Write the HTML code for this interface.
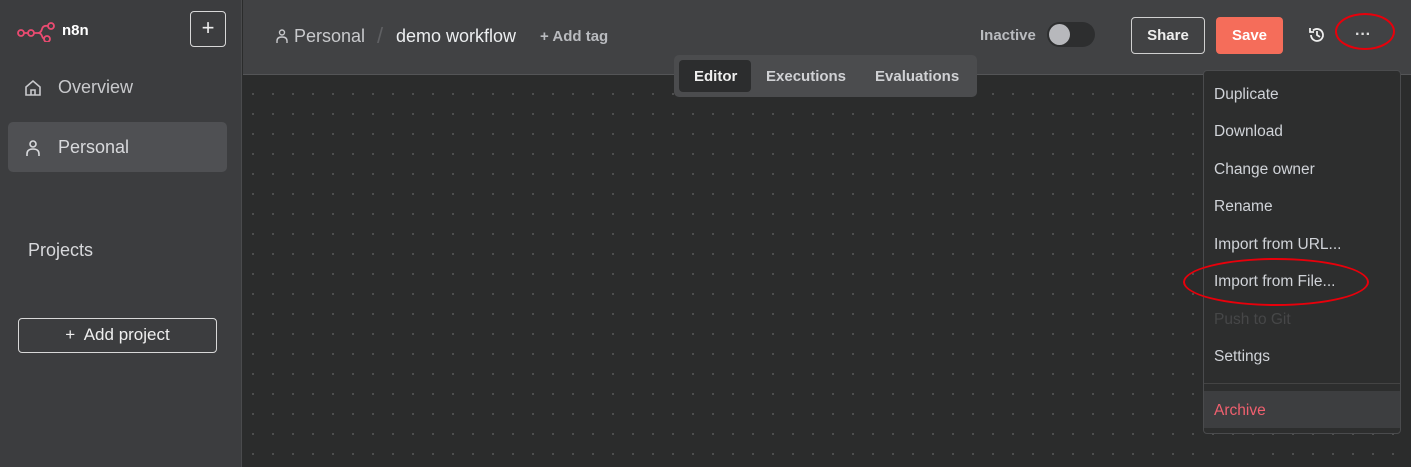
<!DOCTYPE html>
<html><head><style>
*{margin:0;padding:0;box-sizing:border-box}
body{width:1411px;height:467px;overflow:hidden;background:#2b2c2c;font-family:"Liberation Sans",sans-serif;position:relative}
.sb{position:absolute;left:0;top:0;width:242px;height:467px;background:#3c3d3f;border-right:1px solid #4a4b4d}
.hd{position:absolute;left:243px;top:0;right:0;height:75px;background:#414244;border-bottom:1px solid #545557}
.cv{position:absolute;left:243px;top:76px;right:0;bottom:0;background-color:#2b2c2c;background-image:radial-gradient(circle,#5e5f5f 0.7px,transparent 1.1px);background-size:20px 20px;background-position:0px 8px}
.t{position:absolute;white-space:nowrap}
.menu{position:absolute;left:1203px;top:70px;width:198px;height:364px;background:#2d2e2e;border:1px solid #4a4b4d;border-radius:4px}
.mi{position:absolute;left:10px;font-size:15.5px;color:#d0d3d8}
</style></head><body>
<div class="sb">
 <svg class="t" style="left:17px;top:22px" width="40" height="20" viewBox="0 0 40 20"><g fill="none" stroke="#ea4b71" stroke-width="1.8"><circle cx="4" cy="11" r="3"/><circle cx="14" cy="11" r="3"/><circle cx="34" cy="4" r="3"/><circle cx="30" cy="17" r="3"/><path d="M7 11h4M17 11h4q3 0 4-4t6-3M21 11q3 0 4 3t3 3"/></g></svg>
 <div class="t" style="left:62px;top:22px;color:#fff;font-weight:bold;font-size:15px">n8n</div>
 <div class="t" style="left:190px;top:11px;width:36px;height:36px;border:1.5px solid #d8d8d8;border-radius:4px;color:#eee;font-size:22px;text-align:center;line-height:32px">+</div>
 <svg class="t" style="left:23px;top:78px" width="20" height="20" viewBox="0 0 20 20"><path d="M3 9l7-6 7 6v8H3z M8 17v-5h4v5" fill="none" stroke="#c8c9cc" stroke-width="1.6"/></svg>
 <div class="t" style="left:58px;top:77px;color:#c8c9cc;font-size:18px">Overview</div>
 <div class="t" style="left:8px;top:122px;width:219px;height:50px;background:#4f5053;border-radius:5px"></div>
 <svg class="t" style="left:23px;top:138px" width="20" height="20" viewBox="0 0 20 20"><g fill="none" stroke="#d8d9dc" stroke-width="1.6"><circle cx="10" cy="6" r="3"/><path d="M4 18v-2q0-5 6-5t6 5v2"/></g></svg>
 <div class="t" style="left:58px;top:137px;color:#d8d9dc;font-size:18px">Personal</div>
 <div class="t" style="left:28px;top:240px;color:#d8d9dc;font-size:18px">Projects</div>
 <div class="t" style="left:18px;top:318px;width:199px;height:35px;border:1.5px solid #d8d8d8;border-radius:4px;color:#eee;font-size:17px;text-align:center;line-height:31px">+&nbsp; Add project</div>
</div>
<div class="hd">
 <svg class="t" style="left:32px;top:28px" width="14" height="16" viewBox="0 0 14 16"><g fill="none" stroke="#c8c9cc" stroke-width="1.4"><circle cx="7" cy="4.5" r="2.5"/><path d="M2 15v-2q0-4 5-4t5 4v2"/></g></svg>
 <div class="t" style="left:51px;top:26px;color:#c8c9cc;font-size:18px">Personal</div>
 <div class="t" style="left:134px;top:23px;color:#5f6063;font-size:22px">/</div>
 <div class="t" style="left:153px;top:26px;color:#eceef0;font-size:18px">demo workflow</div>
 <div class="t" style="left:297px;top:28px;color:#b9bbbf;font-size:15px;font-weight:bold">+ Add tag</div>
 <div class="t" style="left:737px;top:27px;color:#b9bbbf;font-size:15px;font-weight:bold">Inactive</div>
 <div class="t" style="left:804px;top:22px;width:48px;height:25px;background:#2d2e2f;border-radius:13px"></div>
 <div class="t" style="left:806px;top:24px;width:21px;height:21px;background:#b7b8bc;border-radius:50%"></div>
 <div class="t" style="left:888px;top:17px;width:74px;height:37px;border:1.5px solid #d0d0d0;border-radius:4px;color:#eee;font-size:15px;font-weight:bold;text-align:center;line-height:36px">Share</div>
 <div class="t" style="left:973px;top:17px;width:67px;height:37px;background:#f56d5a;border-radius:4px;color:#fff;font-size:15px;font-weight:bold;text-align:center;line-height:37px">Save</div>
 <svg class="t" style="left:1065px;top:26px" width="18" height="18" viewBox="0 0 18 18"><g fill="none" stroke="#eee" stroke-width="1.8"><path d="M3 9a6 6 0 1 0 2-4.5"/><path d="M2 2v4h4"/><path d="M9 5v4l3 2"/></g></svg>
 <div class="t" style="left:1112px;top:26px;color:#ddd;font-size:16px;font-weight:bold">···</div>
 <div class="t" style="left:1092px;top:13px;width:60px;height:37px;border:2.5px solid #e8000b;border-radius:50%"></div>
</div>
<div class="cv"></div>
<div class="t" style="left:674px;top:55px;width:303px;height:42px;background:#4b4c4e;border-radius:5px"></div>
<div class="t" style="left:679px;top:60px;width:72px;height:32px;background:#2c2d2e;border-radius:4px"></div>
<div class="t" style="left:694px;top:68px;color:#eee;font-size:15px;font-weight:bold">Editor</div>
<div class="t" style="left:766px;top:68px;color:#d0d1d4;font-size:15px;font-weight:bold">Executions</div>
<div class="t" style="left:875px;top:68px;color:#d0d1d4;font-size:15px;font-weight:bold">Evaluations</div>
<div class="menu">
 <div class="mi" style="top:15px">Duplicate</div>
 <div class="mi" style="top:52px">Download</div>
 <div class="mi" style="top:90px">Change owner</div>
 <div class="mi" style="top:127px">Rename</div>
 <div class="mi" style="top:165px">Import from URL...</div>
 <div class="mi" style="top:202px">Import from File...</div>
 <div class="mi" style="top:240px;color:#464748">Push to Git</div>
 <div class="mi" style="top:277px">Settings</div>
 <div style="position:absolute;left:0;right:0;top:312px;height:1px;background:#444"></div>
 <div style="position:absolute;left:0;right:0;top:320px;height:37px;background:#3d3e40"></div>
 <div class="mi" style="top:331px;color:#f0606f">Archive</div>
</div>
<div class="t" style="left:1183px;top:258px;width:186px;height:48px;border:2.5px solid #e8000b;border-radius:50%"></div>
</body></html>
